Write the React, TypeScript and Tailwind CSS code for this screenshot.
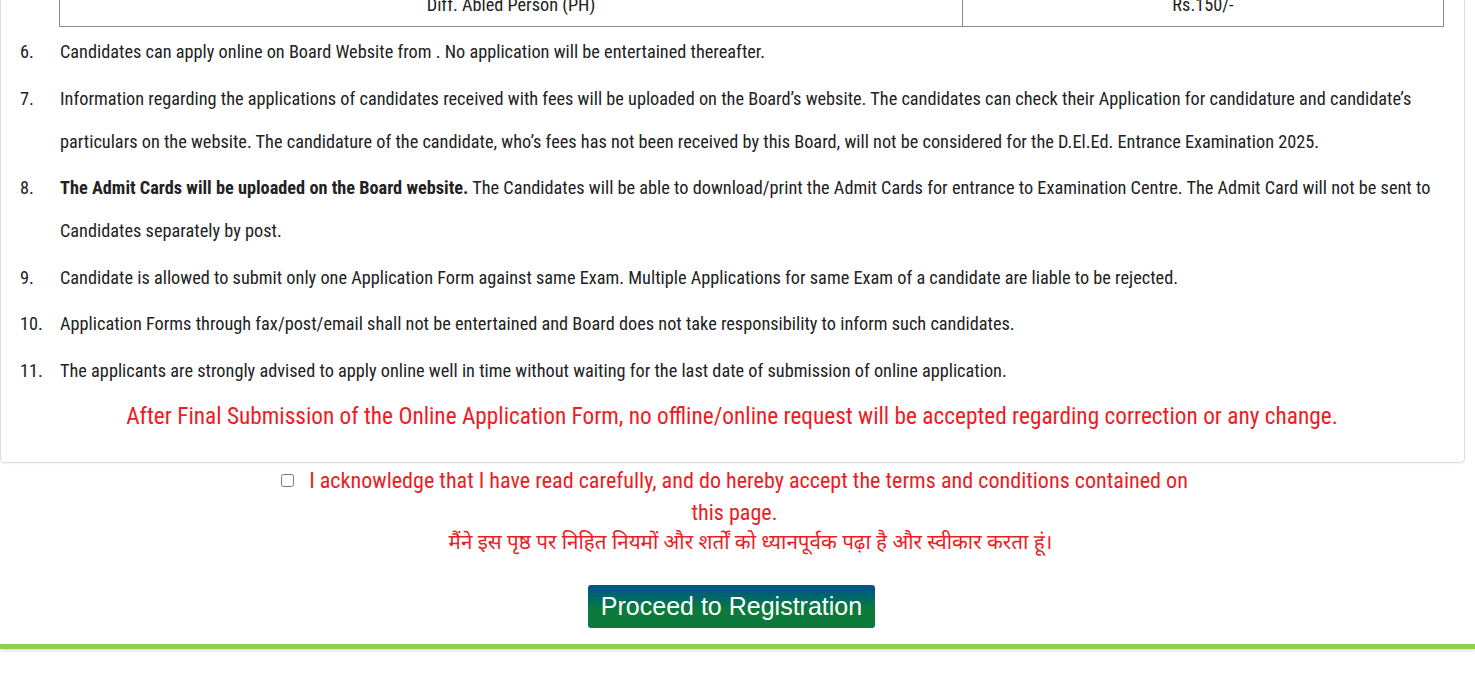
export default function App() {
  const items: { n: string; body: React.ReactNode }[] = [
    {
      n: "6.",
      body: <>Candidates can apply online on Board Website from . No application will be entertained thereafter.</>,
    },
    {
      n: "7.",
      body: (
        <>
          Information regarding the applications of candidates received with fees will be uploaded on the Board’s website. The candidates can check their Application for candidature and candidate’s
          <br />
          particulars on the website. The candidature of the candidate, who’s fees has not been received by this Board, will not be considered for the D.El.Ed. Entrance Examination 2025.
        </>
      ),
    },
    {
      n: "8.",
      body: (
        <>
          <span className="font-bold">The Admit Cards will be uploaded on the Board website.</span> The Candidates will be able to download/print the Admit Cards for entrance to Examination Centre. The Admit Card will not be sent to
          <br />
          Candidates separately by post.
        </>
      ),
    },
    {
      n: "9.",
      body: <>Candidate is allowed to submit only one Application Form against same Exam. Multiple Applications for same Exam of a candidate are liable to be rejected.</>,
    },
    {
      n: "10.",
      body: <>Application Forms through fax/post/email shall not be entertained and Board does not take responsibility to inform such candidates.</>,
    },
    {
      n: "11.",
      body: <>The applicants are strongly advised to apply online well in time without waiting for the last date of submission of online application.</>,
    },
  ];

  return (
    <div className="min-h-[684px] overflow-hidden bg-white [font-family:Roboto,sans-serif] [font-stretch:79%] text-[#222]">
      {/* card */}
      <div className="-mt-[20px] mr-[10px] rounded-b-[5px] border border-t-0 border-[#dedede] pl-[19px] pr-[20px] pb-[24px] shadow-[0_1px_2px_rgba(0,0,0,0.05)]">
        {/* table tail */}
        <div className="ml-[39px] grid grid-cols-[903px_1fr] border-x border-b border-[#8a8a8a] text-[18.3px]">
          <div className="flex h-[46px] items-center justify-center border-r border-[#8a8a8a] pt-[4px]">Diff. Abled Person (PH)</div>
          <div className="flex h-[46px] items-center justify-center pt-[4px]">Rs.150/-</div>
        </div>

        <ol className="mt-[3px] flex flex-col gap-[3.6px] text-[18.3px] leading-[43px]">
          {items.map((it) => (
            <li key={it.n} className="flex">
              <span className="w-[40px] shrink-0">{it.n}</span>
              <span className="whitespace-nowrap">{it.body}</span>
            </li>
          ))}
        </ol>

        <p className="mt-[3.5px] text-center text-[23.3px] [font-stretch:80%] leading-[43px] text-[#ec1c24]">
          After Final Submission of the Online Application Form, no offline/online request will be accepted regarding correction or any change.
        </p>
      </div>

      {/* acknowledgement */}
      <div className="flex justify-center pr-[6px]">
        <label className="block w-[915px] pt-[1px] text-center text-[22.1px] leading-[32px] text-[#ec1c24]">
          <input type="checkbox" className="mr-[15px] inline-block h-[13px] w-[13px] align-[1px]" />
          I acknowledge that I have read carefully, and do hereby accept the terms and conditions contained on this page.
        </label>
      </div>
      <div className="mt-[2px] flex justify-center pl-[26px]">
        <p className="text-[20.6px] leading-[29px] text-[#ec1c24] [font-family:'Noto_Sans_Devanagari','Noto_Sans',sans-serif] [font-stretch:100%]">
          मैंने इस पृष्ठ पर निहित नियमों और शर्तों को ध्यानपूर्वक पढ़ा है और स्वीकार करता हूं।
        </p>
      </div>

      <div className="mt-[26px] flex justify-center pr-[12px]">
        <button className="h-[43px] w-[287px] rounded-[3px] bg-gradient-to-b from-[#0b4d8c] from-[0%] to-[#0b7a3a] to-[55%] [font-family:'Liberation_Sans',Arial,sans-serif] [font-stretch:100%] text-[25px] text-white">
          Proceed to Registration
        </button>
      </div>

      <div className="mt-[16px] h-[5px] bg-[#8fd14f] shadow-[0_2px_3px_rgba(0,0,0,0.12)]" />
    </div>
  );
}
